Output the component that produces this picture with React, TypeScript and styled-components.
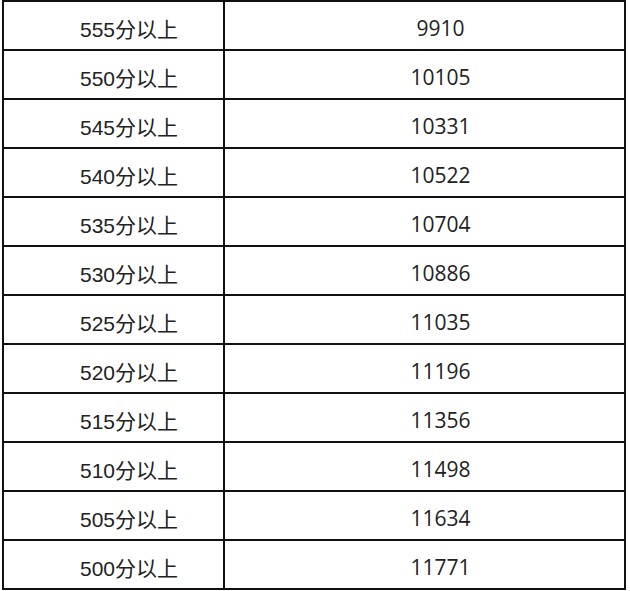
import React from 'react'
import styled, { createGlobalStyle } from 'styled-components'

const Global = createGlobalStyle`
  html, body {
    margin: 0;
    padding: 0;
    background: #fff;
  }
`

const Table = styled.div`
  box-sizing: border-box;
  width: 624px;
  margin-left: 2px;
  border: 2px solid #111;
  background: #fff;
`

const Row = styled.div`
  display: grid;
  grid-template-columns: 221px 399px;
  height: 49px;
  box-sizing: border-box;
  border-bottom: 2px solid #111;
  &:last-child {
    border-bottom: none;
    height: 47px;
  }
`

const Cell = styled.div<{ $right?: boolean }>`
  box-sizing: border-box;
  display: flex;
  align-items: center;
  justify-content: center;
  padding: 5px 0 0 ${p => (p.$right ? 32 : 31)}px;
  color: #222;
  font-size: 21px;
  font-family: ${p =>
    p.$right
      ? '"Open Sans", "Noto Sans CJK SC", sans-serif'
      : '"Liberation Sans", "Noto Sans CJK SC", sans-serif'};
  border-right: ${p => (p.$right ? 'none' : '2px solid #111')};
`

const rows: [number, number][] = [
  [555, 9910],
  [550, 10105],
  [545, 10331],
  [540, 10522],
  [535, 10704],
  [530, 10886],
  [525, 11035],
  [520, 11196],
  [515, 11356],
  [510, 11498],
  [505, 11634],
  [500, 11771],
]

export default function App() {
  return (
    <>
      <Global />
      <Table>
        {rows.map(([score, count]) => (
          <Row key={score}>
            <Cell>{score}分以上</Cell>
            <Cell $right>{count}</Cell>
          </Row>
        ))}
      </Table>
    </>
  )
}
